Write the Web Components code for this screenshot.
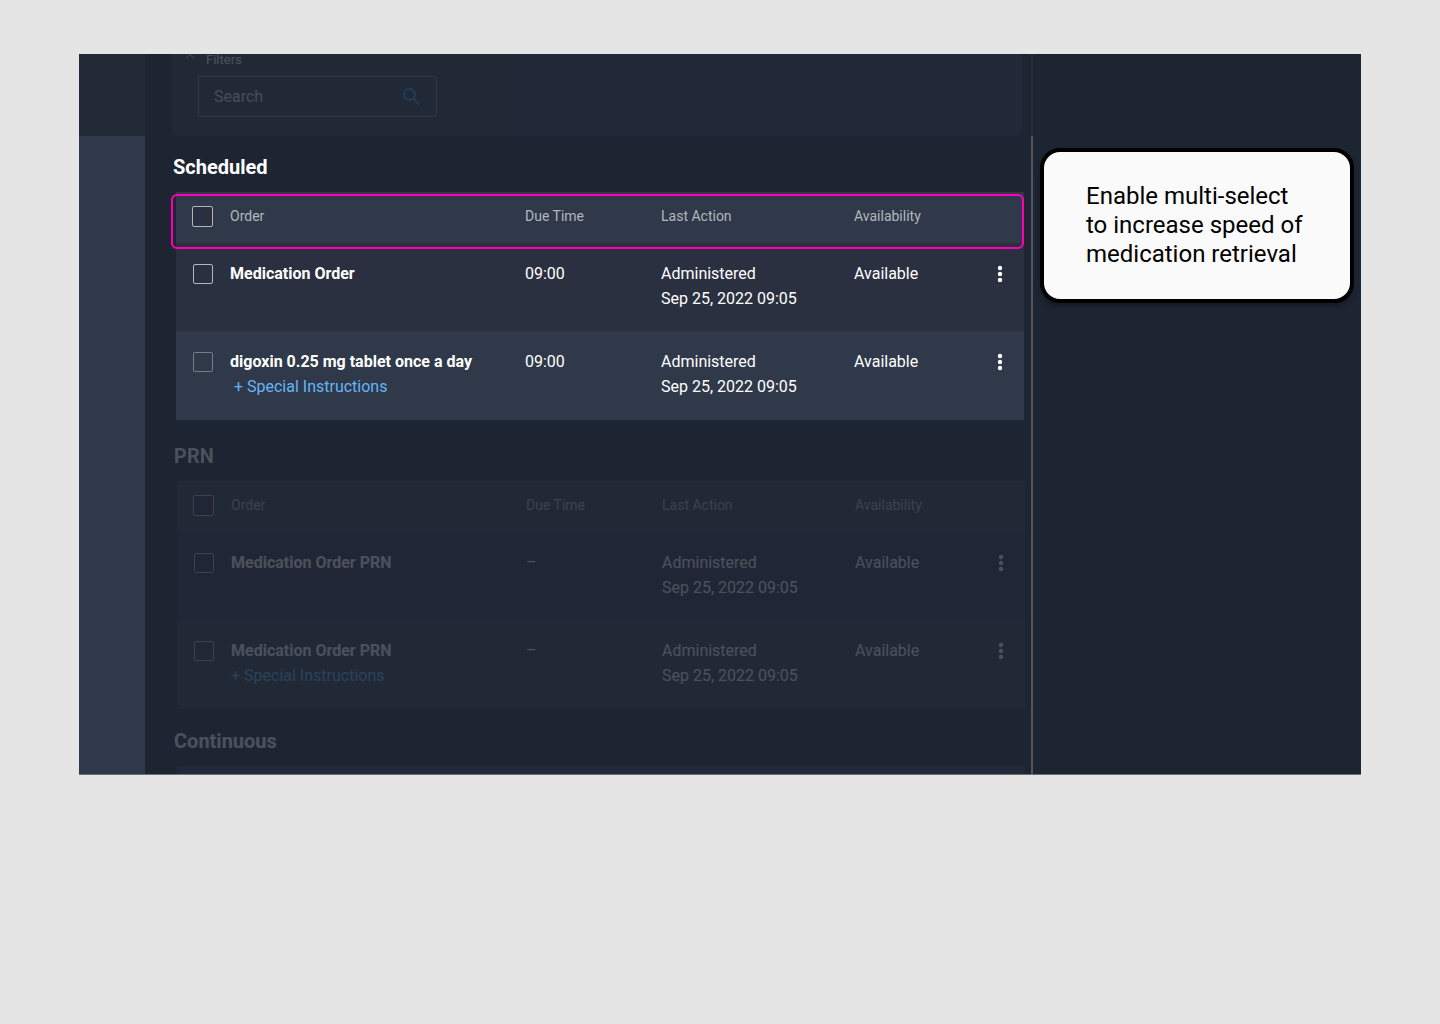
<!DOCTYPE html>
<html lang="en">
<head>
<meta charset="utf-8">
<title>Medication Orders</title>
<style>
    :root {
        --page: #e5e5e5;
        --surface: #1e2532;
        --panel: #2f3949;
        --panel-alt: #2b3040;
        --line: #53565f;
        --link: #64b5f6;
        --accent: #ff00b8;
        --dim: 0.2;
    }

    body {
        margin: 0;
        padding: 54px 79px;
        background: var(--page);
        color: #fff;
        font-family: Roboto, "Liberation Sans", sans-serif;
        font-size: 16px;
    }
</style>
</head>
<body>
<order-workspace>
    <nav-rail slot="rail"></nav-rail>
    <filter-card dimmed></filter-card>
    <order-section heading="Scheduled" highlighted></order-section>
    <order-section heading="PRN" dimmed></order-section>
    <order-section heading="Continuous" dimmed></order-section>
    <call-out slot="side">Enable multi-select to increase speed of medication retrieval</call-out>
</order-workspace>

<script>
function makeTemplate(html) {
    const template = document.createElement("template");
    template.innerHTML = html;
    return template;
}

class BaseElement extends HTMLElement {
    constructor() {
        super();

        this.attachShadow({mode: "open"});
        this.shadowRoot.appendChild(this.constructor.TEMPLATE.content.cloneNode(true));
    }
}

class OrderWorkspace extends BaseElement {
}
OrderWorkspace.TEMPLATE = makeTemplate(`
    <style>
        :host {
            display: grid;
            grid-template-columns: 66px minmax(0, 1fr) 2px 328px;
            grid-template-rows: minmax(0, 1fr);
            box-sizing: border-box;
            aspect-ratio: 16 / 9;
            min-height: 0;
            overflow: hidden;
            background: var(--surface);
            border-bottom: 1px solid #6b6f79;
        }

        main {
            min-height: 0;
            overflow: hidden;
        }

        .divider {
            display: grid;
            grid-template-rows: 82px 1fr;
        }

        .divider span {
            background: var(--line);
        }

        .divider span:first-child {
            opacity: var(--dim);
        }
    </style>
    <slot name="rail"></slot>
    <main><slot></slot></main>
    <div class="divider"><span></span><span></span></div>
    <aside><slot name="side"></slot></aside>
`);

class NavRail extends BaseElement {
}
NavRail.TEMPLATE = makeTemplate(`
    <style>
        :host {
            display: grid;
            grid-template-rows: 82px 1fr;
        }

        div {
            background: var(--panel);
        }

        .top {
            opacity: 0.25;
        }
    </style>
    <div class="top"></div>
    <div></div>
`);

class FilterCard extends BaseElement {
}
FilterCard.TEMPLATE = makeTemplate(`
    <style>
        :host {
            display: block;
            margin: 0 9px 19px 27px;
            padding: 0 26px 19px;
            background: var(--panel);
            border-radius: 0 0 6px 6px;
        }

        :host([dimmed]) {
            opacity: var(--dim);
        }

        .toggle {
            display: flex;
            align-items: flex-start;
            gap: 10px;
            height: 12px;
            margin: 0 0 10px -14px;
            padding: 0;
            border: 0;
            background: none;
            color: #fff;
            font: 13px/12px Roboto, sans-serif;
        }

        .search {
            display: flex;
            align-items: center;
            box-sizing: border-box;
            width: 239px;
            height: 41px;
            padding: 0 15px;
            border: 1px solid #868b96;
            border-radius: 1px 4px 4px 1px;
        }

        input {
            flex: 1;
            min-width: 0;
            padding: 0;
            border: 0;
            outline: 0;
            background: none;
            color: #fff;
            font: 16px/24px Roboto, sans-serif;
        }

        input::placeholder {
            color: #e4e5e8;
            opacity: 1;
        }

        .search button {
            display: flex;
            padding: 0;
            border: 0;
            background: none;
            color: #2196f3;
        }
    </style>
    <button class="toggle" type="button">
        <svg width="12" height="10" viewBox="0 0 12 10" fill="none" stroke="currentColor" stroke-width="1"><path d="M2 4.5l4-4 4 4"/></svg>
        <span>Filters</span>
    </button>
    <div class="search">
        <input type="text" placeholder="Search" aria-label="Search">
        <button type="button" aria-label="Run search">
            <svg width="18" height="18" viewBox="0 0 18 18" fill="none" stroke="currentColor" stroke-width="2"><circle cx="6.5" cy="6.5" r="5.5"/><path d="M10.6 10.6l6.2 6.2"/></svg>
        </button>
    </div>
`);

class OrderSection extends BaseElement {
    connectedCallback() {
        this.shadowRoot.querySelector("h2").textContent = this.getAttribute("heading");
    }

    set orders(orders) {
        const body = this.shadowRoot.querySelector("tbody");
        body.replaceChildren(...orders.map(this._createRow));
        this.shadowRoot.querySelector(".table").hidden = orders.length === 0;
        this.shadowRoot.querySelector(".edge").hidden = orders.length > 0;
    }

    _createRow(order) {
        const row = OrderSection.ROW_TEMPLATE.content.cloneNode(true).firstElementChild;
        row.querySelector(".select").setAttribute("aria-label", `Select ${order.name}`);
        row.querySelector(".select").classList.toggle("faint", !!order.faint);
        row.querySelector(".name").textContent = order.name;
        row.querySelector(".due").textContent = order.due;
        row.querySelector(".action").textContent = order.action;
        row.querySelector(".date").textContent = order.date;
        row.querySelector(".availability").textContent = order.availability;

        const link = row.querySelector("a");
        if (order.instructions) {
            link.textContent = order.instructions;
        } else {
            link.remove();
        }
        return row;
    }
}
OrderSection.TEMPLATE = makeTemplate(`
    <style>
        :host {
            display: block;
            margin: 0 7px 24px 31px;
        }

        :host([dimmed]) {
            margin: 0 6px 20px 32px;
            opacity: var(--dim);
        }

        [hidden] {
            display: none !important;
        }

        h2 {
            margin: 0 0 13px -3px;
            font-size: 20px;
            font-weight: 700;
            line-height: 24px;
        }

        .table {
            position: relative;
        }

        .ring {
            display: none;
        }

        :host([highlighted]) .ring {
            display: block;
            position: absolute;
            top: 2px;
            left: -5px;
            right: 0;
            height: 55px;
            box-sizing: border-box;
            border: 2px solid var(--accent);
            border-radius: 6px;
            pointer-events: none;
        }

        .edge {
            height: 51px;
            background: var(--panel);
        }

        table {
            width: 100%;
            table-layout: fixed;
            border-collapse: collapse;
        }

        .col-select { width: 54px; }
        .col-due { width: 136px; }
        .col-action { width: 193px; }
        .col-availability { width: 110px; }
        .col-menu { width: 60px; }

        th, td {
            padding: 0;
            text-align: left;
            vertical-align: top;
        }

        thead tr {
            height: 51px;
            background: var(--panel);
        }

        th {
            padding-top: 14px;
            color: #b3b6bd;
            font-size: 14px;
            font-weight: 400;
            line-height: 20px;
        }

        tbody tr {
            height: 88px;
            background: var(--panel-alt);
        }

        tbody tr:nth-child(even) {
            background: var(--panel);
        }

        tbody tr:last-child {
            height: 89px;
        }

        td {
            padding-top: 18px;
            line-height: 25px;
        }

        td span, td a {
            display: block;
        }

        .name {
            font-weight: 700;
        }

        a {
            color: var(--link);
            text-decoration: none;
            white-space: pre;
        }

        .select {
            display: block;
            appearance: none;
            box-sizing: border-box;
            width: 21px;
            height: 21px;
            margin: 0 0 0 16px;
            border: 1px solid #b3b6bd;
            border-radius: 2px;
            background: var(--panel-alt);
        }

        td .select {
            width: 20px;
            height: 20px;
            margin: 3px 0 0 17px;
            background: none;
        }

        .select:checked {
            background: var(--link);
        }

        .select.faint {
            border-color: #757b87;
        }

        .menu {
            display: flex;
            align-items: center;
            justify-content: center;
            width: 24px;
            height: 24px;
            margin: 1px 12px 0 auto;
            padding: 0;
            border: 0;
            background: none;
            color: #fff;
        }
    </style>
    <h2></h2>
    <div class="table">
        <table>
            <colgroup>
                <col class="col-select"><col><col class="col-due"><col class="col-action"><col class="col-availability"><col class="col-menu">
            </colgroup>
            <thead>
                <tr>
                    <th><input class="select" type="checkbox" aria-label="Select all"></th>
                    <th>Order</th>
                    <th>Due Time</th>
                    <th>Last Action</th>
                    <th>Availability</th>
                    <th></th>
                </tr>
            </thead>
            <tbody></tbody>
        </table>
        <div class="ring"></div>
    </div>
    <div class="edge" hidden></div>
`);
OrderSection.ROW_TEMPLATE = makeTemplate(`<tr>
    <td><input class="select" type="checkbox"></td>
    <td><span class="name"></span><a href="#"></a></td>
    <td class="due"></td>
    <td><span class="action"></span><span class="date"></span></td>
    <td class="availability"></td>
    <td>
        <button class="menu" type="button" aria-label="More actions">
            <svg width="6" height="18" viewBox="0 0 6 18" fill="currentColor"><circle cx="3" cy="3" r="2.2"/><circle cx="3" cy="9" r="2.2"/><circle cx="3" cy="15" r="2.2"/></svg>
        </button>
    </td>
</tr>`);

class CallOut extends BaseElement {
}
CallOut.TEMPLATE = makeTemplate(`
    <style>
        :host {
            display: block;
            margin: 94px 7px 0;
            padding: 30px 42px;
            border: 4px solid #000;
            border-radius: 20px;
            background: #fafafa;
            box-shadow: 0 4px 4px rgba(0, 0, 0, 0.25);
            color: #000;
            font-size: 24px;
            line-height: 29px;
        }
    </style>
    <slot></slot>
`);

customElements.define("order-workspace", OrderWorkspace);
customElements.define("nav-rail", NavRail);
customElements.define("filter-card", FilterCard);
customElements.define("order-section", OrderSection);
customElements.define("call-out", CallOut);

const administered = {action: "Administered", date: "Sep 25, 2022 09:05", availability: "Available"};
const [scheduled, prn, continuous] = document.querySelectorAll("order-section");

scheduled.orders = [
    {...administered, name: "Medication Order", due: "09:00"},
    {...administered, name: "digoxin 0.25 mg tablet once a day", due: "09:00", instructions: "\u00a0+ Special Instructions", faint: true}
];
prn.orders = [
    {...administered, name: "Medication Order PRN", due: "–"},
    {...administered, name: "Medication Order PRN", due: "–", instructions: "+ Special Instructions"}
];
continuous.orders = [];
</script>
</body>
</html>
